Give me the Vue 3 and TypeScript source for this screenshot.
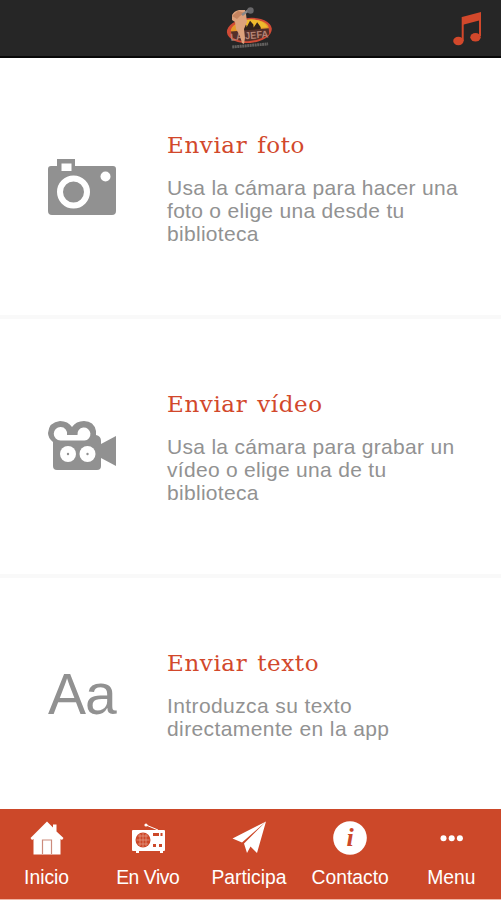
<script setup lang="ts">
interface Option {
  id: string
  title: string
  lines: string[]
}
interface Tab {
  id: string
  label: string
}

const options: Option[] = [
  { id: 'photo', title: 'Enviar foto', lines: ['Usa la cámara para hacer una', 'foto o elige una desde tu', 'biblioteca'] },
  { id: 'video', title: 'Enviar vídeo', lines: ['Usa la cámara para grabar un', 'vídeo o elige una de tu', 'biblioteca'] },
  { id: 'text', title: 'Enviar texto', lines: ['Introduzca su texto', 'directamente en la app'] },
]

const tabs: Tab[] = [
  { id: 'home', label: 'Inicio' },
  { id: 'live', label: 'En Vivo' },
  { id: 'send', label: 'Participa' },
  { id: 'contact', label: 'Contacto' },
  { id: 'menu', label: 'Menu' },
]
</script>

<template>
  <div class="screen">
    <header class="topbar">
      <span></span>
      <svg class="logo" width="50" height="46" viewBox="0 0 50 46">
        <g transform="rotate(-5 25 27)">
          <ellipse cx="25.500" cy="25.500" rx="22.500" ry="12.500" fill="#d04a35" />
          <ellipse cx="26" cy="24.500" rx="19" ry="9.500" fill="#e6992a" />
          <path d="M13 19Q19 14 28 14.500Q41 16 44 24H13z" fill="#efba2d" />
          <path d="M18 29v-8l3-4 2 3v2l4-6 3 4v3l4-5 3 5v7z" fill="#30211b" />
          <path d="M7 25h38v6Q36 36 25 36T8 31z" fill="#55302a" />
          <text x="6" y="34" textLength="38" lengthAdjust="spacingAndGlyphs" class="logo-name">LA JEFA</text>
          <path d="M7 40.500h36" stroke="#85817e" stroke-width="3" stroke-dasharray="2 .5" opacity=".65" />
        </g>
        <path d="M8 10Q10 6 15 5L21 5 22 9 23 17 20 24 21 33 20 39 18 38 16 31 12 24 11 17 8 15z" fill="#dda27c" />
        <path d="M8 11l6-5 7 2-5 3-3 3z" fill="#c5845f" />
        <path d="M18 10l7-5" stroke="#888" stroke-width="2.500" />
        <circle cx="26.500" cy="5.500" r="3.200" fill="#69686a" />
      </svg>
      <svg class="note" width="28" height="34" viewBox="0 0 28 34">
        <path d="M9 5 28 0v8L9 13z" />
        <path d="M9.700 5v24M27 2v22" class="stems" />
        <ellipse cx="5.400" cy="29" rx="5.200" ry="4.200" />
        <ellipse cx="22.500" cy="25.200" rx="5.200" ry="4.200" />
      </svg>
    </header>

    <main class="options">
      <section v-for="o in options" :key="o.id" class="option">
        <div class="picture">
          <svg v-if="o.id === 'photo'" class="camera" width="68" height="56" viewBox="0 0 68 56">
            <path fill-rule="evenodd" d="M3 7h6V0h18v7h38q3 0 3 3v42q0 4-4 4H4q-4 0-4-4V10q0-3 3-3zM13.500 4.500v7.500h10V4.500z" />
            <circle cx="25.500" cy="33" r="13.500" class="ring" />
            <circle cx="57.500" cy="17.500" r="5" class="hole" />
          </svg>
          <svg v-else-if="o.id === 'video'" class="film" width="68" height="50" viewBox="0 0 68 50">
            <path d="M12 0Q20 0 24 6Q28 0 36 0Q46 0 48 10V14Q53 15 53 20V23L68 15V45L53 37V45Q53 49 49 49H9Q5 49 5 45V21Q0 17 0 12Q1 1 12 0z" />
            <path d="M12.500 6a6.500 6.500 0 0 1 6.500 8h10.500a6.500 6.500 0 1 1 7 5.500H12.500a6.700 6.700 0 1 1 0-13.500z" class="hole" />
            <circle cx="20" cy="33" r="8" class="hole" />
            <circle cx="39.500" cy="33" r="8" class="hole" />
            <circle cx="20" cy="33" r="1.200" />
            <circle cx="39.500" cy="33" r="1.200" />
          </svg>
          <span v-else class="letters">Aa</span>
        </div>
        <div class="copy">
          <h2>{{ o.title }}</h2>
          <p><span v-for="line in o.lines" :key="line">{{ line }}</span></p>
        </div>
      </section>
    </main>

    <nav class="tabs">
      <a v-for="t in tabs" :key="t.id" class="tab">
        <svg width="36" height="36" viewBox="0 0 36 36">
          <template v-if="t.id === 'home'">
            <path d="M18 1.500 24 7.500V4.500h3.500V11.500L34.500 18 33 20 31.500 19V34.500H4.500V19L3 20 1.500 18z" />
            <path d="M13.500 34V20h9v14" class="door" />
          </template>
          <template v-else-if="t.id === 'live'">
            <path d="M3 10h31q1 0 1 1v19q0 1-1 1h-1v2h-3v-2H9v2H6v-2H3q-1 0-1-1V11q0-1 1-1z" />
            <circle cx="13" cy="20" r="7.500" class="cut speaker" />
            <path d="M8 16h10M6.500 20h13M8 24h10M10 14v12M13 13v14M16 14v12" class="grille" />
            <path d="M23 14.500h6M30.500 14.500h2M23 25.500h3M29 25.500h3" class="slots" />
            <path d="M16 5l12 5" class="aerial" />
            <circle cx="16" cy="5" r="1.600" />
          </template>
          <template v-else-if="t.id === 'send'">
            <path d="M35 1.500 1.500 18.500 11 22.500zM35 1.500 13 23.500 16 33 19.500 26.500 26 33z" />
          </template>
          <template v-else-if="t.id === 'contact'">
            <circle cx="18" cy="18" r="16.800" />
            <text x="18.200" y="26" text-anchor="middle" class="info">i</text>
          </template>
          <template v-else>
            <circle cx="10.500" cy="18.300" r="3" />
            <circle cx="18.700" cy="18.300" r="3" />
            <circle cx="26.900" cy="18.300" r="3" />
          </template>
        </svg>
        <span>{{ t.label }}</span>
      </a>
    </nav>
  </div>
</template>

<style>
body { margin: 0; background: #fff; }
</style>

<style scoped>
.screen { width: 501px; height: 900px; display: flex; flex-direction: column; overflow: hidden; background: #fff; font-family: "Liberation Sans", Arial, sans-serif; }
.topbar { box-sizing: border-box; height: 58px; flex: none; display: grid; grid-template-columns: 1fr 50px 1fr; align-items: start; padding: 5px 20px 0 17px; background: #262626; border-bottom: 2px solid #080808; }
.logo-name { font: bold 10px "Liberation Sans", sans-serif; fill: #b58475; }
.note { justify-self: end; margin-top: 7px; fill: #d2482b; }
.stems { stroke: #d2482b; stroke-width: 2px; }
.options { flex: none; height: 751px; overflow: hidden; display: flex; flex-direction: column; }
.option { box-sizing: border-box; flex: none; height: 258.700px; display: grid; grid-template-columns: 167px 1fr; }
.option:first-child { height: 257px; }
.option + .option { border-top: 4px solid #f9f9f9; }
.picture { padding-left: 48px; fill: #919191; }
.camera { display: block; margin-top: 101px; }
.film { display: block; margin-top: 102px; }
.letters { display: block; margin-top: 82px; font-size: 57px; line-height: 68px; letter-spacing: -1px; color: #919191; }
.ring { fill: none; stroke: #fff; stroke-width: 6px; }
.hole { fill: #fff; }
.copy { padding-top: 70px; }
.option + .option .copy { padding-top: 68px; }
h2 { margin: 0; font: 400 23px/34px "DejaVu Serif", serif; letter-spacing: .6px; word-spacing: 2px; color: #d2482b; white-space: nowrap; }
p { margin: 14px 0 0; display: flex; flex-direction: column; font-size: 21px; line-height: 23px; letter-spacing: .3px; color: #929292; white-space: nowrap; }
.option:last-child p { letter-spacing: .4px; }
.tabs { box-sizing: border-box; height: 91px; flex: none; display: grid; grid-template-columns: repeat(5, 101.200px); margin-left: -4px; padding-top: 11px; background: #cc4829; border-bottom: 1px solid #f0b5a5; }
.tab { display: flex; flex-direction: column; align-items: center; fill: #fff; color: #fff; font-size: 19.300px; line-height: 24px; }
.tab svg { display: block; }
.tab span { margin-top: 10px; }
.tab:nth-child(2) span { letter-spacing: -.4px; }
.door { fill: none; stroke: #cc8b7c; stroke-width: 1.200px; }
.cut { fill: #cc4829; }
.grille { stroke: #e5a08e; stroke-width: .7px; }
.slots { stroke: #cc4829; stroke-width: 3px; fill: none; }
.aerial { stroke: #fff; stroke-width: 1px; }
.info { font: italic bold 26px "Liberation Serif", serif; fill: #cc4829; }
</style>
